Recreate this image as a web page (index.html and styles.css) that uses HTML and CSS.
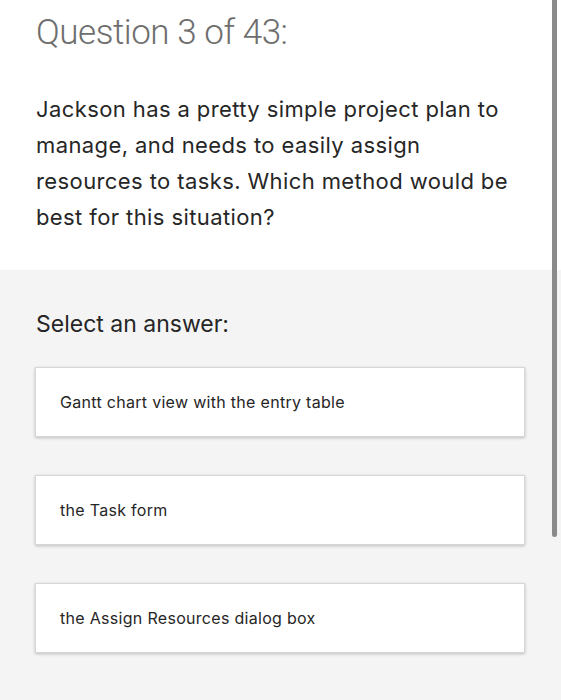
FILE: index.html
```html
<!DOCTYPE html>
<html>
<head>
<meta charset="utf-8">
<link rel="stylesheet" href="styles.css">
</head>
<body>
<div class="page">
  <section class="question">
    <h1 class="q-title">Question 3 of 43:</h1>
    <p class="q-text">Jackson has a pretty simple project plan to manage, and needs to easily assign resources to tasks. Which method would be best for this situation?</p>
  </section>
  <section class="answers">
    <h2 class="a-title">Select an answer:</h2>
    <div class="options">
      <div class="option">Gantt chart view with the entry table</div>
      <div class="option">the Task form</div>
      <div class="option">the Assign Resources dialog box</div>
    </div>
  </section>
  <div class="scrollbar"></div>
</div>
</body>
</html>
```
FILE: styles.css
```css
html, body {
  margin: 0;
  padding: 0;
  background: #f4f4f4;
}
.page {
  position: relative;
  width: 561px;
  height: 700px;
  overflow: hidden;
  font-family: Inter, "Liberation Sans", sans-serif;
}
.question {
  background: #ffffff;
  height: 270px;
  padding: 11px 45px 0 36px;
  box-sizing: border-box;
}
.q-title {
  margin: 0;
  font-family: Roboto, "Liberation Sans", sans-serif;
  font-weight: 300;
  font-size: 35px;
  line-height: 44px;
  color: #6e6e6e;
  letter-spacing: -0.45px;
}
.q-text {
  margin: 36px 0 0 0;
  font-size: 22px;
  line-height: 36px;
  letter-spacing: 0.4px;
  color: #262626;
  font-weight: 400;
}
.answers {
  padding: 37px 35px 0 35px;
}
.a-title {
  margin: 0 0 0 1px;
  font-size: 23px;
  font-weight: 400;
  line-height: 34px;
  color: #262626;
}
.options {
  margin-top: 26px;
  display: flex;
  flex-direction: column;
  gap: 38px;
  width: 490px;
}
.option {
  height: 70px;
  box-sizing: border-box;
  background: #ffffff;
  border: 1px solid #d6d6d6;
  box-shadow: 0 1px 3px rgba(0,0,0,0.22);
  display: flex;
  align-items: center;
  padding: 0 0 0 24px;
  font-size: 16px;
  letter-spacing: 0.3px;
  color: #262626;
}
.scrollbar {
  position: absolute;
  left: 552px;
  top: 0;
  width: 5px;
  height: 537px;
  background: #8a8a8a;
  border-radius: 0 0 3px 3px;
}
```
